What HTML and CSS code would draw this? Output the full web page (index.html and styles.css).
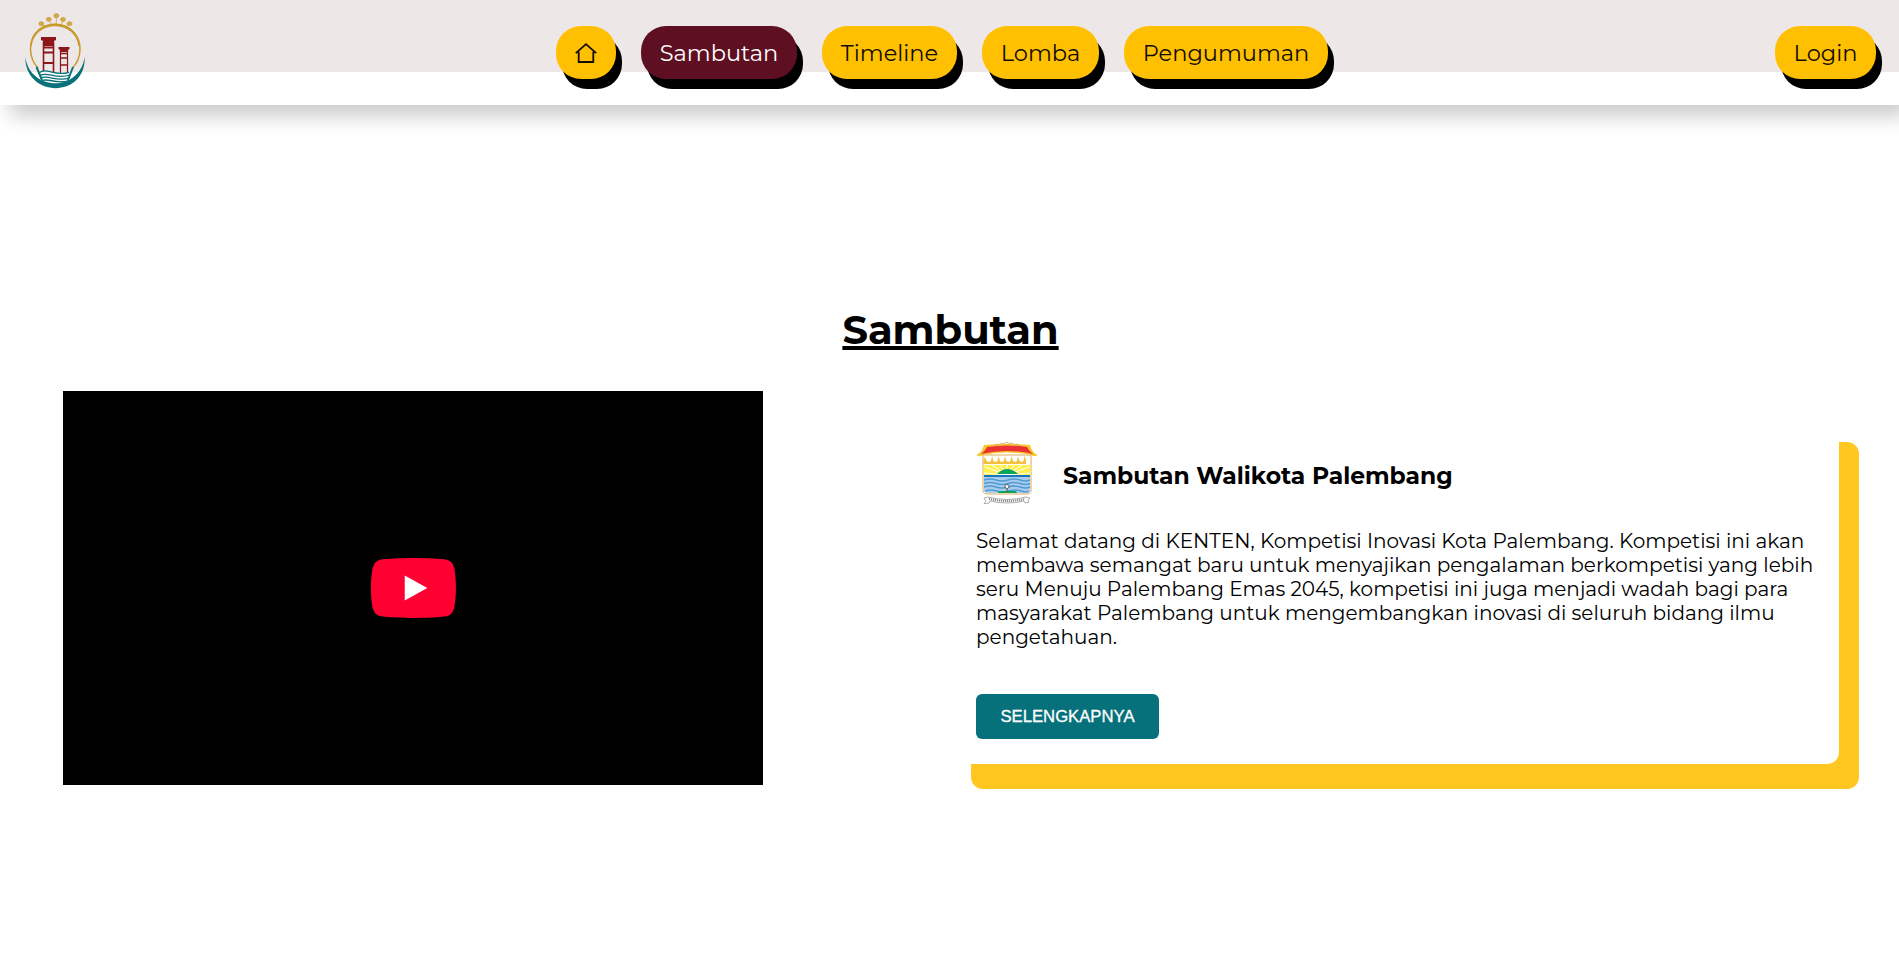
FILE: index.html
```html
<!DOCTYPE html>
<html lang="id">
<head>
<meta charset="utf-8">
<title>KENTEN</title>
<link rel="stylesheet" href="styles.css">
</head>
<body>
<header class="header">
  <a class="brand" href="#">
    <svg width="60" height="76" viewBox="25 13 60 76" fill="none">
      <path d="M38 68A25 27 0 0 1 30.500 50C30 35 41 24.200 55 24.200S80.500 35 80 50A26 27 0 0 1 72.500 68" stroke="#c99a2b" stroke-width="1.500"/>
      <path d="M31 46C31 17 79 17 79 46C75 19 35 19 31 46Z" fill="#c99a2b" stroke="#c99a2b"/>
      <g stroke="#c99a2b" stroke-width=".7"><path d="M56.300 18v6M49.500 21l2 3M63 21.500l-2 3M43 25l2 2M68 25l-2 2"/></g>
      <g fill="#d2a94b" stroke="#cfa440" stroke-width="1"><ellipse cx="56.300" cy="15.700" rx="2.500" ry="2"/><ellipse cx="48.800" cy="19.300" rx="2.400" ry="1.900"/><ellipse cx="63" cy="19.500" rx="2.400" ry="1.900"/><ellipse cx="41.300" cy="23.700" rx="2.400" ry="1.900"/><ellipse cx="69.500" cy="23.700" rx="2.400" ry="1.900"/></g>
      <path d="M41 37h15v3l-2 1v3H43v-3l-2-1zM58.500 47h11v2l-1.500 1v2H60v-2l-1.500-1z" fill="#8c171b"/>
      <g stroke="#8c171b"><path d="M43.500 42v29M53.500 42v30" stroke-width="1.600"/><path d="M43 45h11M43 47.500h11M43 52.500h11M43 63h11" stroke-width="1.800"/><path d="M60.500 50v23M67.500 50v23" stroke-width="1.200"/><path d="M60 53.500h8M60 58h8M60 65h8" stroke-width="1.500"/></g>
      <path d="M25.300 57C30 91 79 93 84.700 57C86 99 25 98 25.300 57Z" fill="#08717a"/>
      <path d="M36.500 67L42 80M73 67L68 80" stroke="#08717a" stroke-width="2"/>
      <g stroke="#08717a" stroke-width="1.300"><path d="M39.500 72.500C47 67 54 77 69 72.300M40 75.500C48 71 55 80 70 75M40.500 78.300C48 74 56 82.500 69.500 77.800M42 80.500C49 78 56 84.500 69 80.500"/></g>
    </svg>
  </a>
  <nav class="menu">
    <a class="pill pill-home" href="#" aria-label="Beranda"><svg width="22" height="22" viewBox="0 0 22 22" fill="none" stroke="#120d00" stroke-width="1.800"><path d="M.8 11.200L11 2.200l10.200 9M3.700 9.700v10.300h14.600V9.700"/></svg></a>
    <a class="pill pill-sambutan" href="#">Sambutan</a>
    <a class="pill pill-timeline" href="#">Timeline</a>
    <a class="pill pill-lomba" href="#">Lomba</a>
    <a class="pill pill-pengumuman" href="#">Pengumuman</a>
  </nav>
  <a class="pill pill-login" href="#">Login</a>
</header>
<main class="main">
  <h1 class="title">Sambutan</h1>
  <div class="content">
    <div class="video">
      <svg width="85" height="60" viewBox="0 0 68 48"><path d="M66.520 7.740c-.78-2.930-2.490-5.410-5.420-6.190C55.790.13 34 0 34 0S12.210.13 6.900 1.550C3.970 2.330 2.270 4.810 1.480 7.740.06 13.050 0 24 0 24s.06 10.950 1.480 16.260c.78 2.930 2.490 5.410 5.420 6.190C12.210 47.870 34 48 34 48s21.790-.13 27.100-1.550c2.930-.78 4.640-3.260 5.420-6.190C67.940 34.950 68 24 68 24s-.06-10.950-1.480-16.260z" fill="#ff0033"/><path d="M45 24L27 14v20" fill="#fff"/></svg>
    </div>
    <section class="card">
      <div class="card-head">
        <svg width="62" height="62" viewBox="976 442 62 62" fill="none">
          <path d="M983 455h48v36q0 3-5 3h-38q-5 0-5-3z" fill="#fff" stroke="#dda85a"/>
          <path d="M983.500 465h47v10h-47z" fill="#fff04e"/>
          <path d="M1007 475l-23-2M1007 475l-22-8M1007 475l-15-10M1007 475l-7-10M1007 475v-10M1007 475l7-10M1007 475l15-10M1007 475l22-8M1007 475l23-2" stroke="#fff" stroke-width="1"/>
          <path d="M983.500 464v-4l1.500-3 1.500 4 2.500 1 2-1 1-5 1.500 5 2 1 2-1 1-5 1.500 5 2 1 2-1 1-5 1.500 5 2 1 2-1 1-5 1.500 5 2 1 2-1 1-5 1.500 5 2 1 2-1 1-5 1.500 4v4z" fill="#f2c13e"/>
          <path d="M984 475h46v15q0 3-4 3h-38q-4 0-4-3z" fill="#a9cced"/>
          <path d="M984 476h46" stroke="#1776bf" stroke-width="2.200"/>
          <path d="M984 480q6-2 12 0t12 0 12 0 10 0M984 483.500q6-2 12 0t12 0 12 0 10 0M984 487q6-2 12 0t12 0 12 0 10 0M985 491q6-2 12 0t12 0 12 0 8 0" stroke="#4e9bd5" stroke-width="1.400"/>
          <path d="M997 474q10-10 21 0z" fill="#0aa45b"/>
          <path d="M998 493l1-2h7l1-1 2 1h7l1 2z" fill="#0aa45b"/>
          <path d="M1007 493v-8" stroke="#666"/><circle cx="1007" cy="486.500" r="2" fill="#fff" stroke="#444" stroke-width=".8"/>
          <path d="M976 455q6-2 8-10 23-2 46 0 2 8 8 10-4 2-9-.5-22-4-44 0-5 2.500-9 .5z" fill="#f7c52b"/>
          <path d="M981 454q5-4 6-7 20-3 40 0 2 4 6 7-26-6-52 0z" fill="#eb3036"/>
          <path d="M994 446l3-2 2 1 3-2 2 1 3-2 3 2 2-1 3 2 2-1 3 2" stroke="#d9a25b" stroke-width=".9"/>
          <path d="M984 498l4-1q19 5 38 0l4 1-2 2 1 2-4 1-1-2q-17 4-34 0l-1 2-5 1 2-3z" fill="#fff" stroke="#888" stroke-width=".7"/>
          <path d="M989 499q18 4 36 0" stroke="#777" stroke-width="2" stroke-dasharray="1 1"/>
        </svg>
        <h2 class="card-title">Sambutan Walikota Palembang</h2>
      </div>
      <p class="card-text">Selamat datang di KENTEN, Kompetisi Inovasi Kota Palembang. Kompetisi ini akan membawa semangat baru untuk menyajikan pengalaman berkompetisi yang lebih seru Menuju Palembang Emas 2045, kompetisi ini juga menjadi wadah bagi para masyarakat Palembang untuk mengembangkan inovasi di seluruh bidang ilmu pengetahuan.</p>
      <a class="button" href="#">SELENGKAPNYA</a>
    </section>
  </div>
</main>
</body>
</html>
```
FILE: styles.css
```css
* { box-sizing: border-box; }
body { margin: 0; height: 978px; overflow: hidden; background: #fff; color: #000; font-family: Montserrat, Inter, "Liberation Sans", sans-serif; }
a { color: inherit; text-decoration: none; }
.header { position: relative; display: flex; justify-content: space-between; align-items: flex-start; height: 105px; padding: 13px 23px 0 25px; background: linear-gradient(#ede7e7 72px, #fff 72px); box-shadow: 10px 10px 20px rgba(0, 0, 0, .22); }
.brand { display: block; width: 60px; height: 76px; }
.menu { display: flex; gap: 25px; padding-top: 13px; margin-left: 51px; margin-right: 27px; }
.pill { display: flex; align-items: center; justify-content: center; height: 53px; padding-top: 1px; border-radius: 25px; background: #ffc002; box-shadow: 6px 10px 0 #000; font-size: 22.500px; font-weight: 400; white-space: nowrap; color: #120d00; }
.pill-home { width: 60px; }
.pill-sambutan { width: 156px; background: #5e1022; color: #fff; }
.pill-timeline { width: 135px; }
.pill-lomba { width: 117px; }
.pill-pengumuman { width: 204px; }
.pill-login { width: 101px; margin-top: 13px; }
.main { padding: 200px 60px 0 63px; }
.title { margin: 0 0 0 -3px; padding-left: 2px; height: 86px; line-height: 50px; text-align: center; font-size: 40px; font-weight: 700; text-decoration: underline; text-decoration-thickness: 4px; text-underline-offset: 2px; text-decoration-skip-ink: none; }
.content { display: flex; justify-content: space-between; align-items: flex-start; }
.video { display: flex; align-items: center; justify-content: center; width: 700px; height: 394px; background: #000; }
.card { width: 888px; height: 347px; margin: 26px 0 0; padding: 25px; border-radius: 12px; background: #fff; box-shadow: 20px 25px 0 #ffc71f; }
.card-head { display: flex; align-items: center; gap: 25px; height: 62px; }
.card-head svg { flex: none; }
.card-title { margin: 5px 0 0; font-size: 23.450px; font-weight: 700; white-space: nowrap; }
.card-text { margin: 25px 0 0; height: 120px; font-size: 20px; line-height: 24px; }
.button { display: flex; align-items: center; justify-content: center; width: 183px; height: 45px; margin-top: 45px; border-radius: 6px; background: #07717b; color: #fff; font: 16.700px "Liberation Sans", sans-serif; -webkit-text-stroke: .3px #fff; }
```
